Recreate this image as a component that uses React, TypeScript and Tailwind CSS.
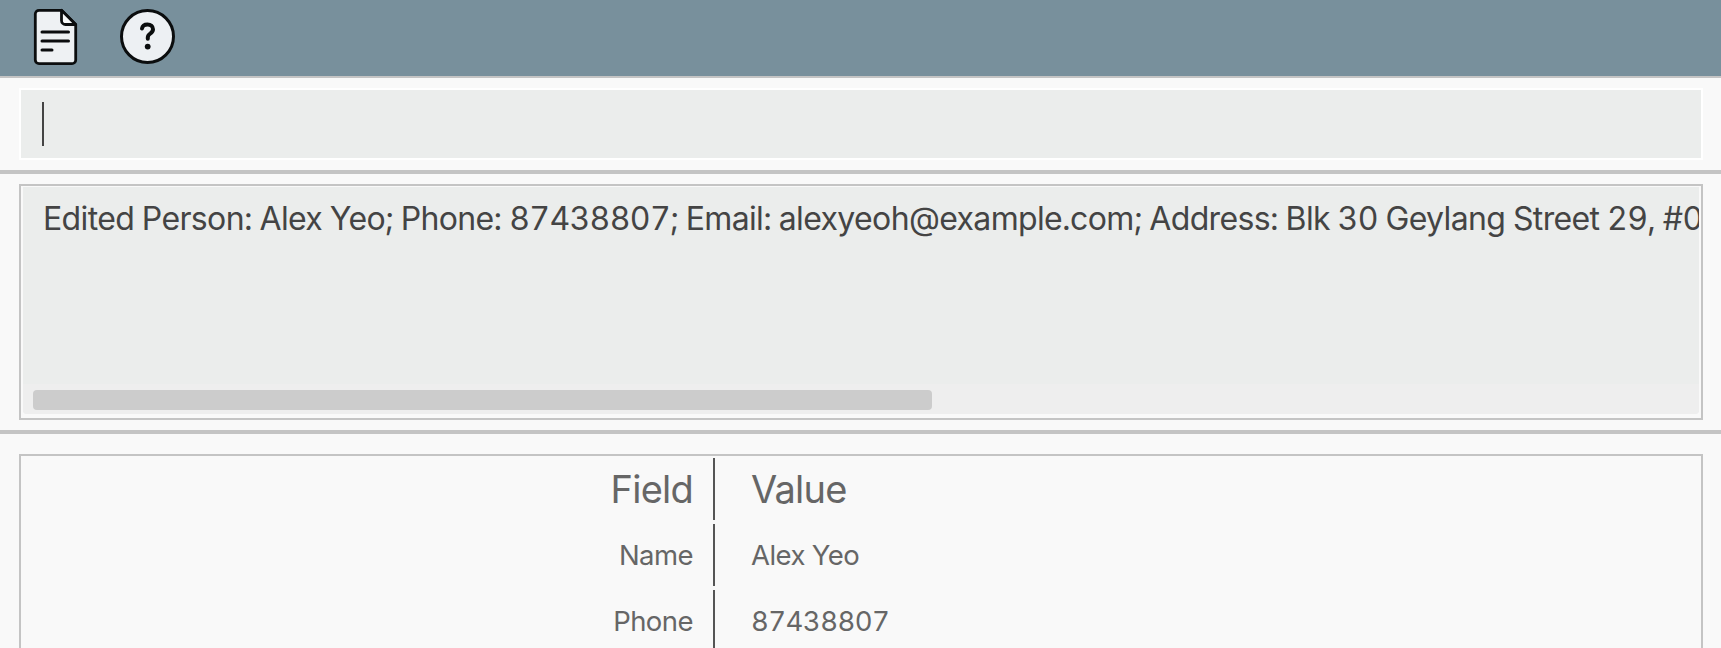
const FONT = "font-['Inter',sans-serif]";

const ROWS = [
  { field: "Name", value: "Alex Yeo" },
  { field: "Phone", value: "87438807" },
];

function DocIcon() {
  return (
    <svg width="46" height="58" viewBox="0 0 46 58" fill="none">
      <path
        d="M6 2.3H28.5L42.7 16.5V52a3.7 3.7 0 0 1-3.7 3.7H6A3.7 3.7 0 0 1 2.3 52V6A3.7 3.7 0 0 1 6 2.3Z"
        fill="#eef1f3"
        stroke="#0b0d0e"
        strokeWidth="2.8"
        strokeLinejoin="round"
      />
      <path d="M28.5 2.3V12.5a4 4 0 0 0 4 4H42.7Z" fill="#f8fafa" stroke="#0b0d0e" strokeWidth="2.8" strokeLinejoin="round" />
      <path d="M9 24H35.5M9 33H35.5M9 42H19" stroke="#0b0d0e" strokeWidth="3" strokeLinecap="round" />
    </svg>
  );
}

function HelpIcon() {
  return (
    <svg width="56" height="56" viewBox="0 0 56 56" fill="none">
      <circle cx="27.5" cy="27.5" r="26" fill="#edf0f3" stroke="#0b0d0e" strokeWidth="3" />
      <path
        d="M22 19.5c.5-2.8 2.8-4 5.5-4 3.2 0 5.5 2 5.5 4.8 0 2.2-1.3 3.3-2.8 4.3-1.6 1-2.4 2-2.4 3.9v1.2"
        stroke="#0b0d0e"
        strokeWidth="4"
        strokeLinecap="round"
      />
      <circle cx="27.7" cy="37.6" r="2.9" fill="#0b0d0e" />
    </svg>
  );
}

export default function App() {
  return (
    <div className={`flex h-[648px] flex-col overflow-hidden bg-[#f9f9f9] tabular-nums ${FONT}`}>
      {/* Toolbar */}
      <header className="flex h-[78px] shrink-0 items-center gap-[41px] border-b-2 border-[#c4c4c4] bg-[#78909c] pb-[2px] pl-[33px]">
        <DocIcon />
        <HelpIcon />
      </header>

      {/* Command box */}
      <div className="shrink-0 px-[19px] pt-[10px] pr-[18px] pb-[10px]">
        <div className="flex h-[72px] items-center border-2 border-white bg-[#ebedec] pl-[21px]">
          <div className="h-[44px] w-[2px] bg-[#444444]" />
        </div>
      </div>
      <div className="h-[4px] shrink-0 bg-[#c4c4c4]" />

      {/* Result box */}
      <div className="shrink-0 pt-[10px] pr-[18px] pb-[10px] pl-[19px]">
        <div className="h-[236px] border-2 border-[#c4c4c4] pt-[1px] pr-[2px] pb-[4px] pl-[2px]">
          <div className="relative h-full overflow-hidden rounded-b-[4px] bg-[#ebedec]">
            <p className="whitespace-nowrap pt-[12px] pl-[20px] text-[32px] leading-[39px] tracking-[-0.02em] [word-spacing:-0.3px] text-[#444444]">
              Edited Person: Alex Yeo; Phone: 87438807; Email: alexyeoh@example.com; Address: Blk 30 Geylang Street 29, #06-40; Tags: [friends]
            </p>
            <div className="absolute right-0 bottom-0 left-0 h-[30px] bg-[#eeeeee] pt-[6px] pl-[10px]">
              <div className="h-[20px] w-[899px] rounded-[4px] bg-[#cccccc]" />
            </div>
          </div>
        </div>
      </div>
      <div className="h-[4px] shrink-0 bg-[#c4c4c4]" />

      {/* Details table */}
      <div className="min-h-0 flex-1 pt-[20px] pr-[18px] pl-[19px]">
        <div className="h-[300px] border-2 border-[#c4c4c4] pt-[2px]">
          <div className="flex h-[62px] items-center text-[38px] tracking-[-0.02em] text-[#666666]">
            <div className="w-[692px] pt-[1px] pr-[20px] text-right">Field</div>
            <div className="h-full w-[2px] bg-[#555555]" />
            <div className="pt-[1px] pl-[36px]">Value</div>
          </div>
          {ROWS.map(({ field, value }) => (
            <div key={field} className="mt-[4px] flex h-[62px] items-center text-[27.5px] tracking-[-0.02em] text-[#666666]">
              <div className="w-[692px] pt-[2px] pr-[20px] text-right">{field}</div>
              <div className="h-full w-[2px] bg-[#555555]" />
              <div className="pt-[2px] pl-[36px]">{value}</div>
            </div>
          ))}
        </div>
      </div>
    </div>
  );
}
